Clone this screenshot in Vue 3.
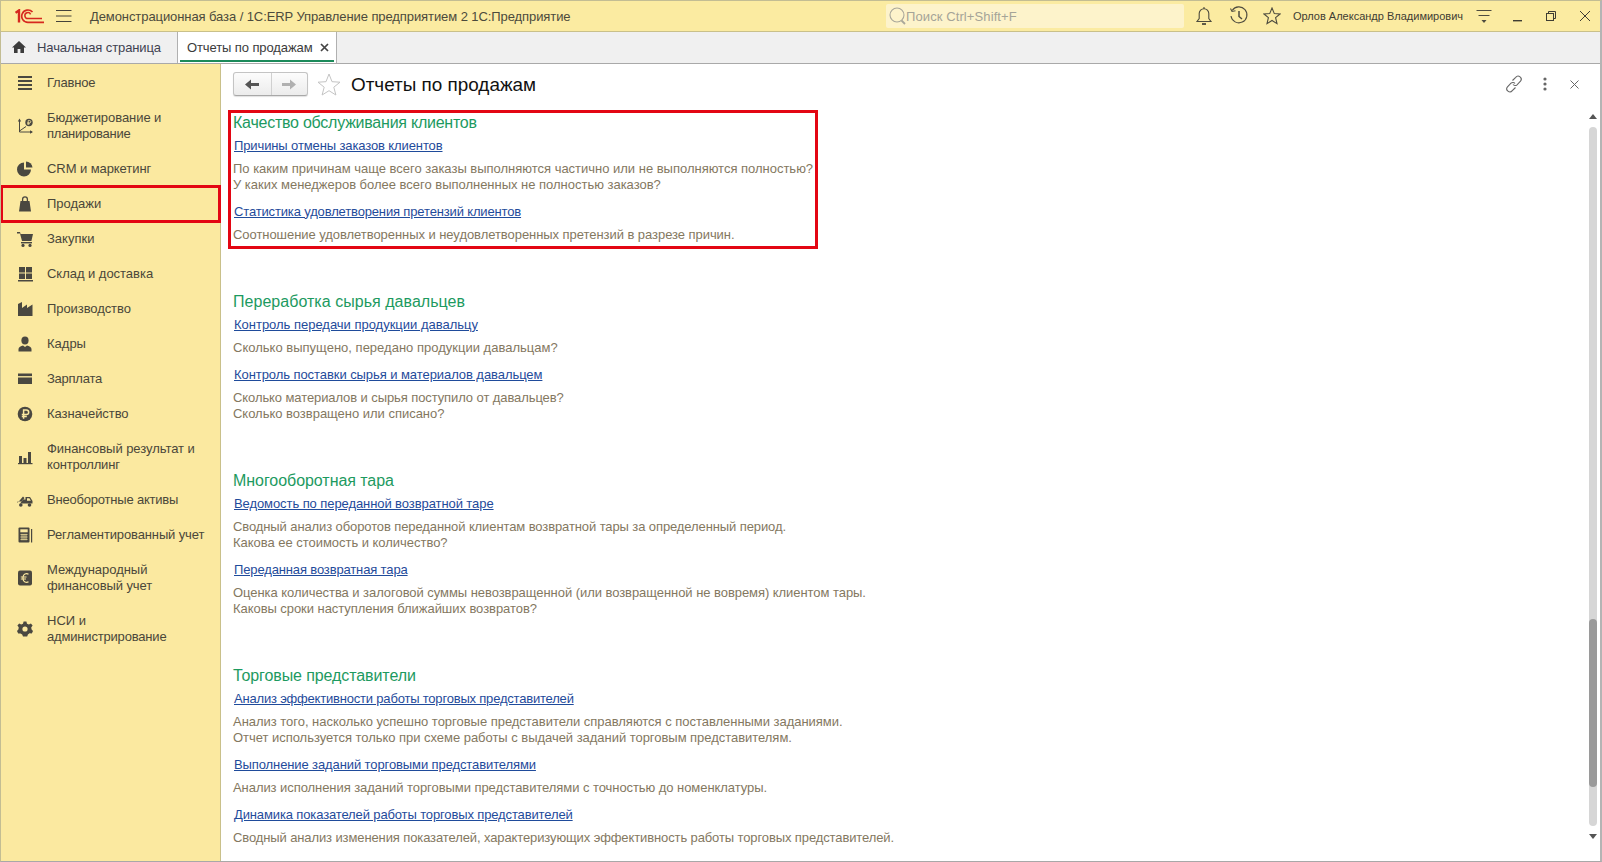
<script setup>
const menu = [
  { id: 'main', lines: [['Главное', -0.2]] },
  { id: 'budget', lines: [['Бюджетирование и', -0.06], ['планирование', -0.25]] },
  { id: 'crm', lines: [['CRM и маркетинг', -0.07]] },
  { id: 'sales', lines: [['Продажи', 0]], active: true },
  { id: 'buy', lines: [['Закупки', 0]] },
  { id: 'stock', lines: [['Склад и доставка', -0.03]] },
  { id: 'prod', lines: [['Производство', -0.08]] },
  { id: 'hr', lines: [['Кадры', 0]] },
  { id: 'pay', lines: [['Зарплата', -0.25]] },
  { id: 'treasury', lines: [['Казначейство', -0.08]] },
  { id: 'fin', lines: [['Финансовый результат и', -0.05], ['контроллинг', -0.18]] },
  { id: 'assets', lines: [['Внеоборотные активы', -0.2]] },
  { id: 'reg', lines: [['Регламентированный учет', -0.13]] },
  { id: 'intl', lines: [['Международный', -0.03], ['финансовый учет', -0.1]] },
  { id: 'nsi', lines: [['НСИ и', 0], ['администрирование', -0.18]] },
]

const sections = [
  {
    title: 'Качество обслуживания клиентов', ls: -0.24,
    marked: true,
    items: [
      { link: 'Причины отмены заказов клиентов', ls: -0.115, desc: [['По каким причинам чаще всего заказы выполняются частично или не выполняются полностью?', -0.012], ['У каких менеджеров более всего выполненных не полностью заказов?', -0.016]] },
      { link: 'Статистика удовлетворения претензий клиентов', ls: -0.15, desc: [['Соотношение удовлетворенных и неудовлетворенных претензий в разрезе причин.', -0.054]] },
    ],
  },
  {
    title: 'Переработка сырья давальцев', ls: 0.036,
    items: [
      { link: 'Контроль передачи продукции давальцу', ls: -0.014, desc: [['Сколько выпущено, передано продукции давальцам?', 0.01]] },
      { link: 'Контроль поставки сырья и материалов давальцем', ls: -0.067, desc: [['Сколько материалов и сырья поступило от давальцев?', -0.092], ['Сколько возвращено или списано?', -0.02]] },
    ],
  },
  {
    title: 'Многооборотная тара', ls: -0.05,
    items: [
      { link: 'Ведомость по переданной возвратной таре', ls: -0.08, desc: [['Сводный анализ оборотов переданной клиентам возвратной тары за определенный период.', -0.103], ['Какова ее стоимость и количество?', -0.03]] },
      { link: 'Переданная возвратная тара', ls: -0.14, desc: [['Оценка количества и залоговой суммы невозвращенной (или возвращенной не вовремя) клиентом тары.', -0.054], ['Каковы сроки наступления ближайших возвратов?', -0.057]] },
    ],
  },
  {
    title: 'Торговые представители', ls: -0.09,
    items: [
      { link: 'Анализ эффективности работы торговых представителей', ls: -0.196, desc: [['Анализ того, насколько успешно торговые представители справляются с поставленными заданиями.', -0.028], ['Отчет используется только при схеме работы с выдачей заданий торговым представителям.', -0.036]] },
      { link: 'Выполнение заданий торговыми представителями', ls: -0.105, desc: [['Анализ исполнения заданий торговыми представителями с точностью до номенклатуры.', -0.063]] },
      { link: 'Динамика показателей работы торговых представителей', ls: -0.13, desc: [['Сводный анализ изменения показателей, характеризующих эффективность работы торговых представителей.', -0.112]] },
    ],
  },
]

const track = (v) => ({ letterSpacing: v + 'px' })
</script>

<template>
  <div class="window">
    <header class="titlebar">
      <svg class="logo" width="29" height="15" viewBox="0 0 29 15" fill="none" stroke="#d6281f">
        <path d="M0.5 3.8L4 1.4V13.5" stroke-width="2.4" />
        <path d="M17.5 3A6.2 6.2 0 1 0 13 13.4H29" stroke-width="1.7" />
        <path d="M15.6 5.4A3 3 0 1 0 13 9.6H27" stroke-width="1.5" />
      </svg>
      <svg class="burger" width="16" height="12" viewBox="0 0 16 12" stroke="#45433a" stroke-width="1">
        <path d="M0 0.5H15.5M0 6H15.5M0 11.5H15.5" />
      </svg>
      <div class="apptitle">Демонстрационная база / 1С:ERP Управление предприятием 2 1С:Предприятие</div>
      <div class="search">
        <svg width="18" height="20" viewBox="0 0 18 20" fill="none" stroke="#a9a79a" stroke-width="1.1">
          <circle cx="9" cy="9" r="7" />
          <path d="M13.5 14.5L17 18" stroke-width="1.8" />
        </svg>
        <span>Поиск Ctrl+Shift+F</span>
      </div>
      <div class="sysicons">
        <svg class="sys" width="18" height="20" viewBox="0 0 18 20" fill="none" stroke="#4e4c3f" stroke-width="1.1">
          <path d="M2 15.5H16L13.8 12.5V7.5A4.8 4.8 0 0 0 4.2 7.5V12.5Z" />
          <path d="M9 1V3" />
          <path d="M7 18H11" stroke-width="1.8" />
        </svg>
        <svg class="sys" width="20" height="20" viewBox="0 0 20 20" fill="none" stroke="#4e4c3f" stroke-width="1.1">
          <path d="M3.2 4.5A8 8 0 1 1 2 10" />
          <path d="M1.5 2.5L3 5.5L6.5 4.8" />
          <path d="M10 5V10.5L13 13" stroke-width="1.5" />
        </svg>
        <svg class="sys" width="18" height="18" viewBox="0 0 18 18" fill="none" stroke="#4e4c3f" stroke-width="1.1">
          <path d="M9 1L11.3 6.6L17 7L12.6 10.7L14 16.6L9 13.5L4 16.6L5.4 10.7L1 7L6.7 6.6Z" />
        </svg>
        <span class="user">Орлов Александр Владимирович</span>
        <svg class="sys" width="16" height="16" viewBox="0 0 16 16" fill="#4e4c3f" stroke="none">
          <rect x="0.5" y="2" width="15" height="1" />
          <rect x="2.5" y="7" width="11" height="1" />
          <path d="M5.5 12H10.5L8 15Z" />
        </svg>
        <svg class="win" width="12" height="12" viewBox="0 0 12 12" fill="#3f3d33"><rect x="1" y="10" width="9" height="1.4" /></svg>
        <svg class="win" width="12" height="12" viewBox="0 0 12 12" fill="none" stroke="#3f3d33">
          <rect x="1.5" y="3.5" width="7" height="7" />
          <path d="M3.5 3.5V1.5H10.5V8.5H8.5" />
        </svg>
        <svg class="win" width="12" height="12" viewBox="0 0 12 12" fill="none" stroke="#3f3d33">
          <path d="M1 1L11 11M11 1L1 11" />
        </svg>
      </div>
    </header>

    <nav class="tabs">
      <div class="tab home">
        <svg width="14" height="12" viewBox="0 0 14 12" fill="#3c3c3c">
          <path d="M7 0L14 6.4H12V12H8.4V8H5.6V12H2V6.4H0Z" />
        </svg>
        <span>Начальная страница</span>
      </div>
      <div class="tab current">
        <span>Отчеты по продажам</span>
        <svg width="9" height="9" viewBox="0 0 9 9" stroke="#444" stroke-width="1.7"><path d="M1 1L8 8M8 1L1 8" /></svg>
      </div>
    </nav>

    <div class="body">
      <aside class="sidebar">
        <div v-for="m in menu" :key="m.id" class="mitem" :class="{ active: m.active }">
          <svg class="micon" width="16" height="16" viewBox="0 0 16 16" fill="#4a4840">
            <template v-if="m.id === 'main'">
              <rect x="1" y="1" width="14" height="2" /><rect x="1" y="5" width="14" height="2" /><rect x="1" y="9" width="14" height="2" /><rect x="1" y="13" width="14" height="2" />
            </template>
            <template v-else-if="m.id === 'budget'">
              <path d="M2.5 2V14H15" fill="none" stroke="#4a4840" />
              <path d="M0.8 3.5L2.5 0.5L4.2 3.5ZM13 12.3L16 14L13 15.7Z" />
              <path d="M2.5 13L9 8.5" fill="none" stroke="#4a4840" />
              <circle cx="12" cy="4.5" r="3.7" />
              <path d="M11.2 7V2.6H12.7A1.1 1.1 0 0 1 12.7 4.8H10.2M10.2 5.8H13" fill="none" stroke="#fbe9a0" stroke-width="0.8" />
            </template>
            <template v-else-if="m.id === 'crm'">
              <path d="M7 1.5V8.5H14A7 7 0 1 1 7 1.5Z" />
              <path d="M9 0.5A6.5 6.5 0 0 1 15.5 6.5H9Z" />
            </template>
            <template v-else-if="m.id === 'sales'">
              <path d="M3.5 5H12.5L14 15.5H2Z" />
              <path d="M5.6 6V3.2A2.4 2.4 0 0 1 10.4 3.2V6" fill="none" stroke="#4a4840" stroke-width="1.3" />
            </template>
            <template v-else-if="m.id === 'buy'">
              <path d="M0 1H3L3.6 3H16L14.4 10H5L3 2.6H0Z" />
              <rect x="4" y="11" width="11" height="1.4" />
              <circle cx="6" cy="14.4" r="1.6" /><circle cx="13" cy="14.4" r="1.6" />
            </template>
            <template v-else-if="m.id === 'stock'">
              <rect x="2" y="1" width="6" height="5.5" /><rect x="9" y="1" width="6" height="5.5" /><rect x="2" y="7.5" width="6" height="5.5" /><rect x="9" y="7.5" width="6" height="5.5" /><rect x="1" y="14" width="15" height="1.5" />
            </template>
            <template v-else-if="m.id === 'prod'">
              <path d="M1 15V3L5 1V7L10 3.5V7L15.5 3.5V15Z" />
            </template>
            <template v-else-if="m.id === 'hr'">
              <ellipse cx="8" cy="4.5" rx="3.6" ry="4" />
              <path d="M1.5 15.5V13C1.5 11 4 10 6 9.5L8 11L10 9.5C12 10 14.5 11 14.5 13V15.5Z" />
            </template>
            <template v-else-if="m.id === 'pay'">
              <rect x="1" y="2.5" width="14" height="2.6" /><rect x="1" y="6.5" width="14" height="6.5" />
            </template>
            <template v-else-if="m.id === 'treasury'">
              <circle cx="8" cy="8" r="7.3" />
              <path d="M6.6 12.8V4H9.4A2.3 2.3 0 0 1 9.4 8.6H4.8M4.8 10.6H9.8" fill="none" stroke="#fbe9a0" stroke-width="1.5" />
            </template>
            <template v-else-if="m.id === 'fin'">
              <rect x="2" y="7" width="3" height="7" /><rect x="6.5" y="9" width="3" height="5" /><rect x="11" y="3" width="3" height="11" /><rect x="1" y="14" width="14.5" height="1.2" />
            </template>
            <template v-else-if="m.id === 'assets'">
              <path d="M0.5 11L6 4.5L7.5 6L3 11.5H15.5V9L13 5H8.5V7.5H6L4.5 9.5H0.5Z" />
              <circle cx="3.8" cy="13" r="1.8" /><circle cx="12.5" cy="13" r="1.8" />
              <path d="M10 6.2H12.4L13.8 8.8H10Z" fill="#fbe9a0" />
            </template>
            <template v-else-if="m.id === 'reg'">
              <rect x="1.5" y="0.5" width="11" height="15" rx="1" /><rect x="14" y="2" width="1.2" height="13.5" />
              <rect x="3.3" y="2.3" width="7.4" height="3" fill="#fbe9a0" />
              <path d="M3.4 7.6H10.6M3.4 10H10.6M3.4 12.4H10.6M5 6.8V13.4M7 6.8V13.4M9 6.8V13.4" fill="none" stroke="#fbe9a0" stroke-width="0.7" />
            </template>
            <template v-else-if="m.id === 'intl'">
              <rect x="1" y="0.5" width="14" height="15" rx="2" />
              <path d="M11.5 4.2A3.6 3.6 0 0 0 6 7V9A3.6 3.6 0 0 0 11.5 11.8M3.8 7H9.5M3.8 9H9" fill="none" stroke="#fbe9a0" stroke-width="1.2" />
            </template>
            <template v-else-if="m.id === 'nsi'">
              <path d="M6.6 0.5H9.4L10 2.7L11.9 3.5L13.9 2.4L15.6 4.5L14.2 6.4L14.6 8.5L16 9.9L14.8 12.4L12.5 12.2L10.9 13.6L10.2 15.5H6L5.2 13.6L3.5 12.4L1.2 12.4L0 9.9L1.5 8.2L1.7 6.3L0.4 4.5L2.2 2.4L4.2 3.5L6 2.7Z" />
              <circle cx="8" cy="8" r="2.6" fill="#fbe9a0" />
            </template>
          </svg>
          <div class="mtext"><div v-for="l in m.lines" :key="l[0]" :style="track(l[1])">{{ l[0] }}</div></div>
        </div>
      </aside>

      <main class="main">
        <div class="toolbar">
          <div class="navbtns">
            <button class="nav">
              <svg width="14" height="11" viewBox="0 0 14 11" fill="#555"><path d="M0 5.5L6 0.5V4H14V7H6V10.5Z" /></svg>
            </button>
            <button class="nav">
              <svg width="14" height="11" viewBox="0 0 14 11" fill="#b0b0b0"><path d="M14 5.5L8 0.5V4H0V7H8V10.5Z" /></svg>
            </button>
          </div>
          <svg class="fav" width="24" height="23" viewBox="0 0 24 23" fill="#fff" stroke="#c4c4c4">
            <path d="M12 1L15 8.7L23 9.2L16.8 14.2L18.9 22L12 17.7L5.1 22L7.2 14.2L1 9.2L9 8.7Z" />
          </svg>
          <h1>Отчеты по продажам</h1>
          <div class="formicons">
            <svg width="18" height="18" viewBox="0 0 18 18" fill="none" stroke="#666" stroke-width="1.1">
              <path d="M7.5 5.5L10.7 2.3A2.8 2.8 0 0 1 15.5 6.2L12 9.8A2.8 2.8 0 0 1 8 9.5" />
              <path d="M10.5 12.5L7.3 15.7A2.8 2.8 0 0 1 2.5 11.8L6 8.2A2.8 2.8 0 0 1 10 8.5" />
            </svg>
            <svg width="4" height="14" viewBox="0 0 4 14" fill="#666"><circle cx="2" cy="2" r="1.6" /><circle cx="2" cy="7" r="1.6" /><circle cx="2" cy="12" r="1.6" /></svg>
            <svg class="fclose" width="9" height="9" viewBox="0 0 9 9" stroke="#666"><path d="M0.5 0.5L8.5 8.5M8.5 0.5L0.5 8.5" /></svg>
          </div>
        </div>

        <div class="content">
          <section v-for="s in sections" :key="s.title" class="section" :class="{ marked: s.marked }">
            <h2 :style="track(s.ls)">{{ s.title }}</h2>
            <div v-for="it in s.items" :key="it.link" class="report">
              <a :style="track(it.ls)">{{ it.link }}</a>
              <p><span v-for="d in it.desc" :key="d[0]" :style="track(d[1])">{{ d[0] }}</span></p>
            </div>
          </section>
        </div>

        <div class="scroll">
          <svg width="8" height="5" viewBox="0 0 8 5" fill="#555"><path d="M0 5L4 0L8 5Z" /></svg>
          <div class="track"><div class="thumb"></div></div>
          <svg width="8" height="5" viewBox="0 0 8 5" fill="#555"><path d="M0 0L4 5L8 0Z" /></svg>
        </div>
      </main>
    </div>
  </div>
</template>

<style>
html, body { margin: 0; overflow: hidden; }
</style>

<style scoped>
.window {
  width: 1602px;
  height: 862px;
  box-sizing: border-box;
  display: flex;
  flex-direction: column;
  border: 1px solid #c3bd93;
  border-right: 2px solid #b4b4b4;
  border-bottom: 1px solid #a8a8a8;
  overflow: hidden;
  font-family: "Liberation Sans", Arial, sans-serif;
  font-size: 13px;
  background: #fff;
}
.titlebar {
  height: 30px;
  flex: none;
  display: flex;
  align-items: center;
  background: #fbeba1;
  border-bottom: 1px solid #c9c08a;
  color: #4c4a3c;
}
.logo { margin-left: 14px; }
.burger { margin-left: 12px; }
.apptitle { margin-left: 18px; white-space: nowrap; font-size: 13px; width: 796px; letter-spacing: -0.085px; }
.search {
  width: 298px;
  height: 24px;
  background: #fdf3cb;
  border-radius: 2px;
  display: flex;
  align-items: center;
  color: #a5a498;
  font-size: 13px;
  box-sizing: border-box;
  padding-left: 2px;
  letter-spacing: 0.1px;
}
.sysicons { display: flex; align-items: center; flex: 1; height: 100%; }
.sysicons svg:nth-of-type(1) { margin-left: 11px; }
.sysicons svg:nth-of-type(2) { margin-left: 16px; }
.sysicons svg:nth-of-type(3) { margin-left: 14px; }
.user { margin-left: 12px; font-size: 11px; white-space: nowrap; color: #3f3d33; width: 170px; }
.sysicons svg:nth-of-type(4) { margin-left: 13px; }
.sysicons svg:nth-of-type(5) { margin-left: 20px; }
.sysicons svg:nth-of-type(6) { margin-left: 21px; }
.sysicons svg:nth-of-type(7) { margin-left: 22px; }

.tabs {
  height: 31px;
  flex: none;
  display: flex;
  background: #f0f0f0;
  border-bottom: 1px solid #a9a9a9;
  color: #3f4250;
}
.tab { display: flex; align-items: center; white-space: nowrap; box-sizing: border-box; font-size: 13px; letter-spacing: -0.1px; padding-bottom: 1px; }
.home { width: 176px; padding-left: 11px; gap: 11px; }
.current {
  width: 160px;
  padding-left: 9px;
  gap: 7px;
  background: #fff;
  border-left: 1px solid #b0b0b0;
  border-right: 1px solid #b0b0b0;
  position: relative;
  color: #3b3b3b;
}
.current::after {
  content: "";
  position: absolute;
  left: 2px;
  right: 2px;
  bottom: 1px;
  height: 2px;
  background: #1b8a5a;
}

.body { flex: 1; display: flex; min-height: 0; }
.sidebar {
  width: 220px;
  flex: none;
  background: #fbe9a0;
  border-right: 1px solid #c9c08a;
  box-sizing: border-box;
  color: #4a473a;
  padding-top: 1px;
}
.mitem {
  display: flex;
  align-items: center;
  padding: 9.5px 0 9.5px 16px;
  line-height: 16px;
  position: relative;
}
.micon { flex: none; margin-right: 14px; }
.mitem.active::after {
  content: "";
  position: absolute;
  left: -1px;
  right: -1px;
  top: -1px;
  bottom: -2px;
  border: 3px solid #e30613;
  pointer-events: none;
}

.main { flex: 1; position: relative; min-width: 0; }
.toolbar { height: 40px; display: flex; align-items: center; padding-left: 12px; box-sizing: border-box; }
.navbtns {
  display: flex;
  height: 24px;
  border: 1px solid #c4c4c4;
  border-bottom-color: #a8a8a8;
  border-radius: 3px;
  background: linear-gradient(#fcfcfc, #ececec);
  box-shadow: 0 1px 1px rgba(0,0,0,.12);
  box-sizing: border-box;
}
.nav {
  width: 36.5px;
  height: 100%;
  padding: 0;
  border: 0;
  background: none;
  display: flex;
  align-items: center;
  justify-content: center;
}
.nav + .nav { border-left: 1px solid #d0d0d0; }
.fav { margin-left: 9px; }
h1 { margin: 2px 0 0 10px; font-size: 18.9px; font-weight: 400; color: #111; white-space: nowrap; }
.formicons { margin-left: auto; display: flex; align-items: center; margin-right: 21px; gap: 20px; }
.fclose { margin-left: 3px; }

.content { padding: 9px 0 0 12px; color: #84785f; }
.section + .section { margin-top: 49.5px; }
.section.marked { position: relative; }
.section.marked::after {
  content: "";
  position: absolute;
  left: -5px;
  top: -3px;
  width: 590px;
  height: 139px;
  box-sizing: border-box;
  border: 3px solid #e30613;
  pointer-events: none;
}
h2 { margin: 0 0 4.5px; font-size: 16px; line-height: 20px; font-weight: 400; color: #1d9a5f; }
.report + .report { margin-top: 11px; }
.report a { display: block; margin-left: 1px; line-height: 16px; color: #1f4b9b; text-decoration: underline; }
.report p { margin: 7px 0 0; line-height: 16px; }
.report p span { display: block; }

.scroll {
  position: absolute;
  right: 3px;
  top: 50px;
  bottom: 22px;
  width: 8px;
  display: flex;
  flex-direction: column;
  align-items: center;
  gap: 8px;
}
.scroll svg { flex: none; }
.track { flex: 1; width: 8px; background: #d6d6d6; border-radius: 4px; position: relative; }
.thumb {
  position: absolute;
  left: 0;
  right: 0;
  top: 492px;
  height: 168px;
  background: #9a9a9a;
  border-radius: 4px;
}
</style>
